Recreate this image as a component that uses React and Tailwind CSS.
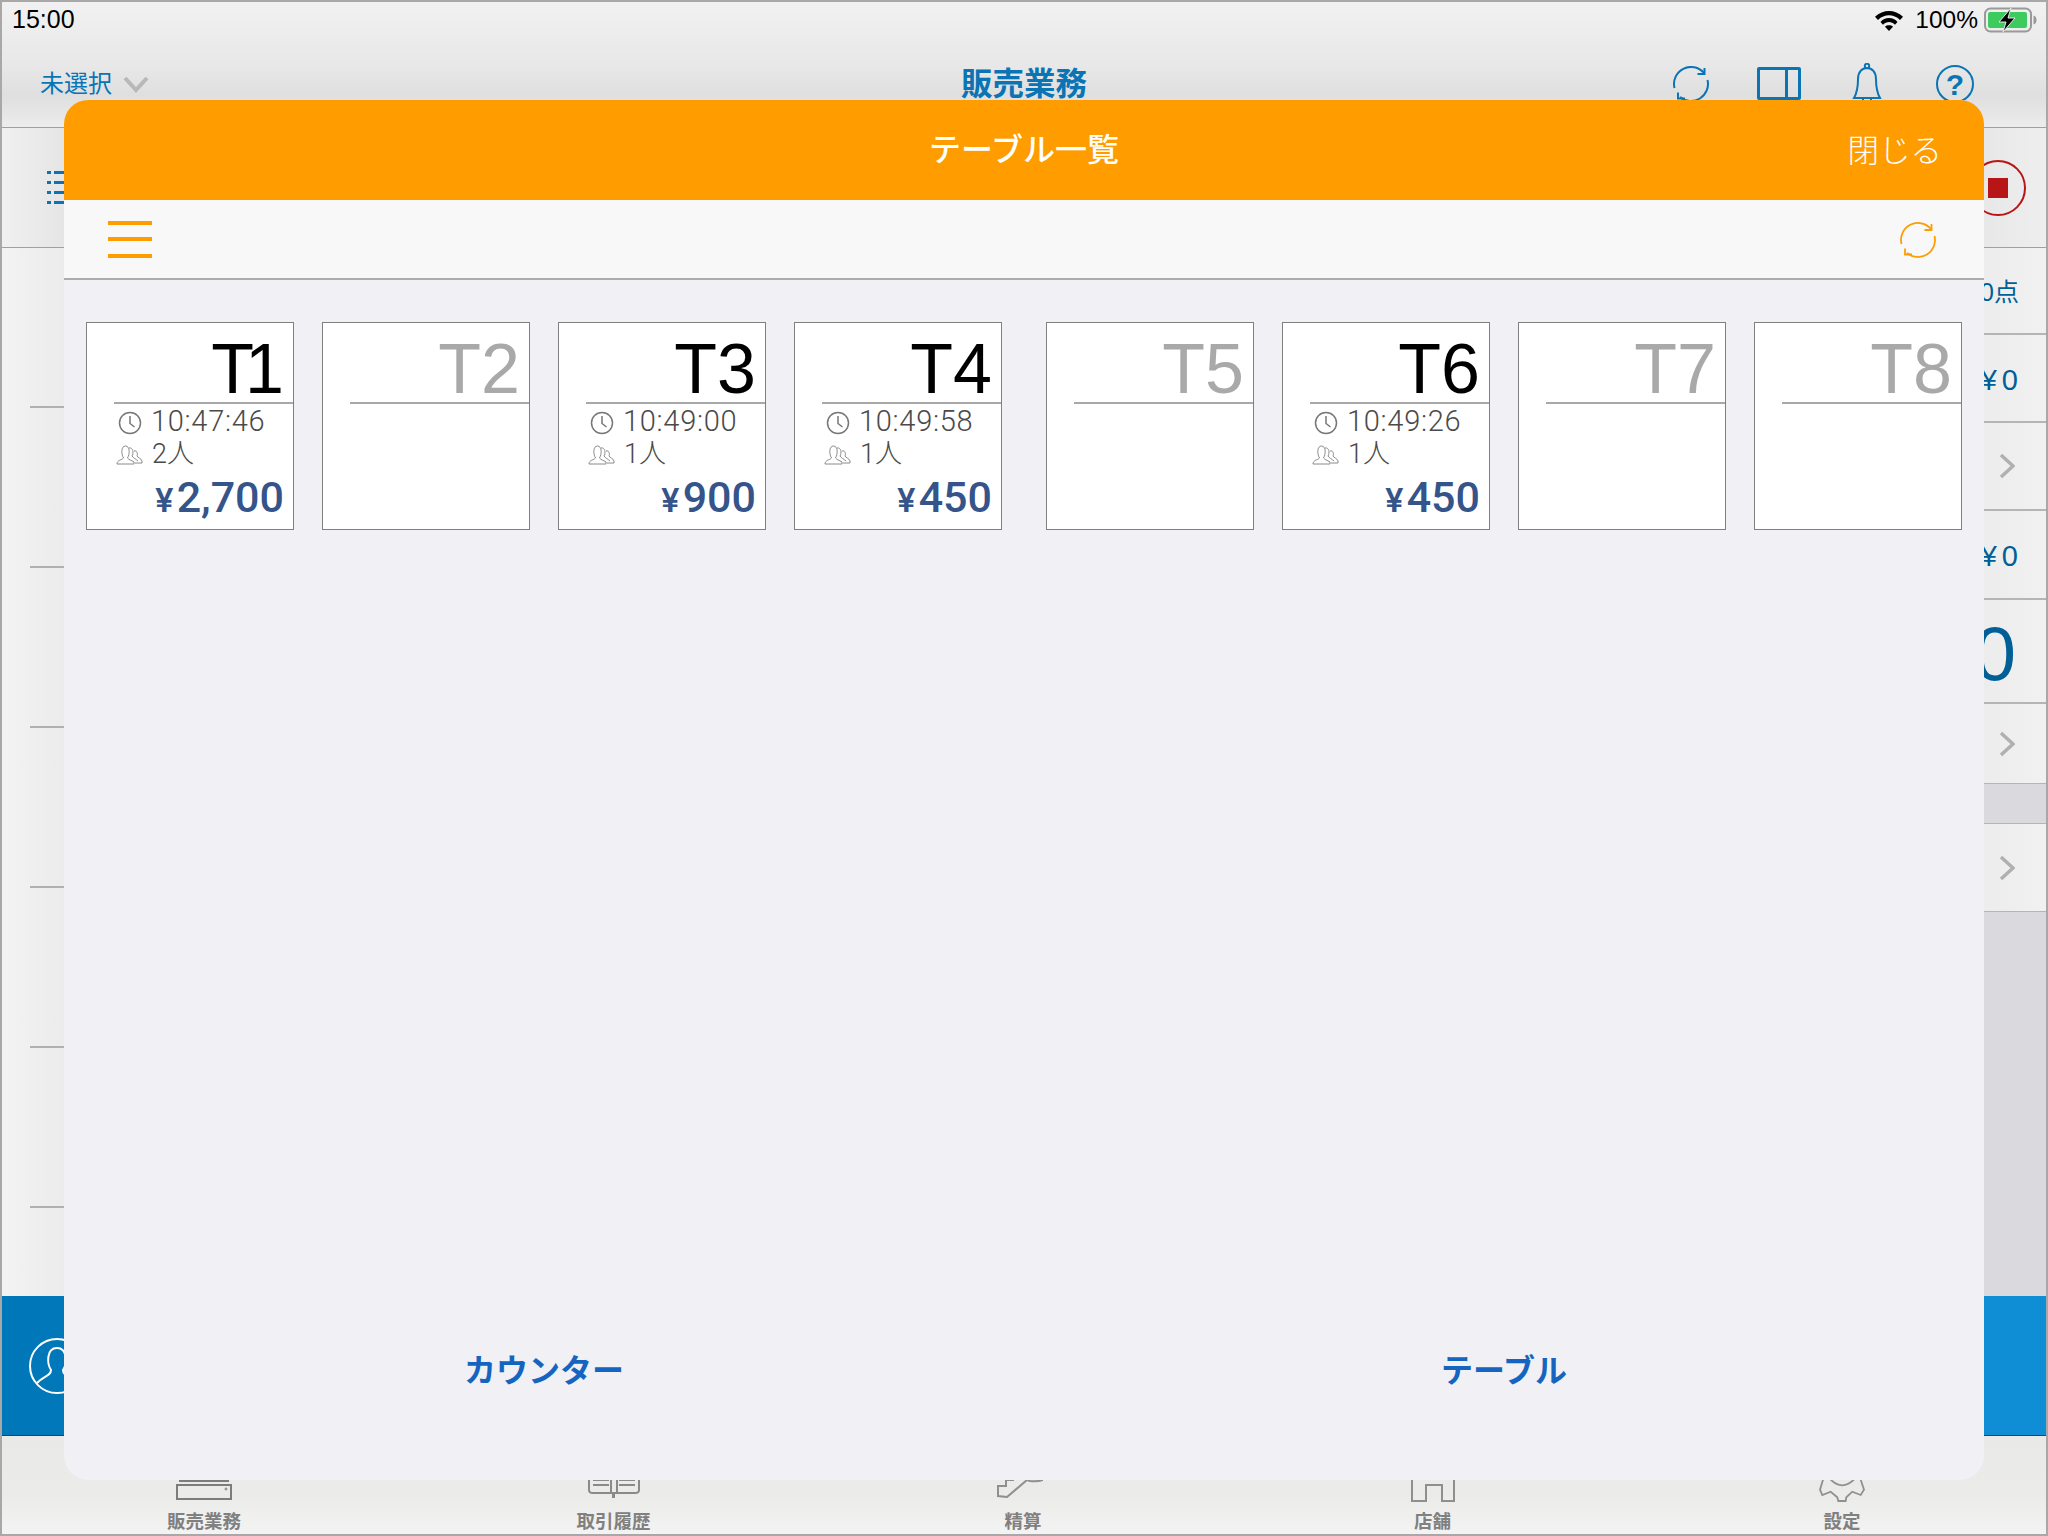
const FONT = "font-['Liberation_Sans','Noto_Sans_CJK_JP',sans-serif]";

function RefreshIcon({ className, color, width }) {
  return (
    <svg className={className} viewBox="0 0 36 36" fill="none" stroke={color} strokeWidth={width}>
      <path d="M1.5 22 A17 17 0 0 1 31 7" />
      <path d="M24.500 8 H31.500 V2" />
      <path d="M34.5 14 A17 17 0 0 1 7 31" />
      <path d="M5 26.500 V32.500 H12" />
    </svg>
  );
}

function Clock() {
  return (
    <svg className="w-[24px] h-[24px] shrink-0 mt-[3px]" viewBox="0 0 24 24" fill="none" stroke="#777" strokeWidth="1.5">
      <circle cx="12" cy="12" r="10.500" />
      <path d="M12 5 V12.500 L16.500 16" />
    </svg>
  );
}

function People() {
  return (
    <svg className="w-[27px] h-[20px] shrink-0 mt-[2px]" viewBox="0 0 27 20" fill="none" stroke="#8a8a8a" strokeWidth="1">
      <path d="M1 19 C1 15 6 15 7.500 13 C5 9 5 1 9.500 1 C14 1 14 9 11.500 13 C13 15 15 15 18 17 L18 19 Z" />
      <path d="M13 3 C17 2 18 8 16 11 C17 13 20 14 22 16" />
      <path d="M18 6 C21 5 22 9 21 11 C22 13 25 13 26 16 L26 18 L19 18" />
    </svg>
  );
}

function Card({ name, time, people, price }) {
  const active = Boolean(time);
  return (
    <div className="w-[208px] h-[208px] bg-white border border-[#808080] flex flex-col shrink-0">
      <div className={`h-[81px] ml-[27px] border-b-2 border-[#a8a8a8] flex justify-end items-end pr-[9px] text-[70px] leading-[66px] ${active ? "text-black" : "text-[#a9a9a9]"}`}>
        <span className={name === "T1" ? "tracking-[-9px] mr-[9px]" : ""}>{name}</span>
      </div>
      {active && (
        <div className="flex flex-col pl-[31px] pr-[9px] font-['Roboto','Noto_Sans_CJK_JP',sans-serif] font-light text-[#4a4a4a]">
          <div className="flex items-center gap-[9px] h-[33px] mt-[1px] text-[29px] leading-[33px]">
            <Clock />
            <span className="tracking-[0.7px]">{time}</span>
          </div>
          <div className="flex items-center gap-[9px] -ml-[2px] h-[30px] mt-[1px] text-[27px] leading-[30px]">
            <People />
            <span>{people}</span>
          </div>
          <div className="flex justify-end items-baseline h-[48px] mt-[4px] leading-[48px] text-[#34548a] font-medium text-[43px]">
            <span className="font-['Inter',sans-serif] font-semibold text-[33px] mr-[3px]">¥</span>
            <span>{price}</span>
          </div>
        </div>
      )}
    </div>
  );
}

function Chevron() {
  return (
    <svg className="w-[16px] h-[26px]" viewBox="0 0 16 26" fill="none" stroke="#b0b0b0" strokeWidth="3.500">
      <path d="M2 2 L14 13 L2 24" />
    </svg>
  );
}

function TabItem({ label, children }) {
  return (
    <div className="w-[100px] flex flex-col items-center justify-end">
      <div className="h-[64px] flex items-end">{children}</div>
      <div className="text-[18.500px] leading-[22px] font-bold text-[#808080] mt-[9px]">{label}</div>
    </div>
  );
}

function Background() {
  return (
    <div className="w-[2048px] h-[1536px] flex flex-col border-t-2 border-l-2 border-r-2 border-b-2 border-[#a8a8a8] overflow-hidden">
      <div className="h-[126px] shrink-0 relative border-b border-[#a0a0a0] bg-[linear-gradient(180deg,#f1f1f1_0%,#e8e8e8_50%,#dfdfdf_75%,#ececec_100%)]">
        <div className="flex justify-between items-center h-[36px] pl-[10px] pr-[8px] text-black text-[25px]">
          <span>15:00</span>
          <div className="flex items-center">
            <svg className="w-[28px] h-[21px]" viewBox="0 0 28 22" preserveAspectRatio="none" fill="#000">
              <path d="M14 22 L10 17.500 C12 15.500 16 15.500 18 17.500 Z" />
              <path d="M14 8.500 C17.500 8.500 20.500 10 22.500 12.500 L20 15.500 C16.500 11.500 11.500 11.500 8 15.500 L5.500 12.500 C7.500 10 10.500 8.500 14 8.500 Z" />
              <path d="M14 1 C19 1 24 3 28 7 L25 10.500 C18.500 4 9.500 4 3 10.500 L0 7 C4 3 9 1 14 1 Z" />
            </svg>
            <span className="text-[24.500px] ml-[12px]">100%</span>
            <svg className="w-[54px] h-[26px] ml-[6px]" viewBox="0 0 54 26" fill="none">
              <rect x="1" y="1.500" width="46" height="23" rx="5.500" stroke="#999" strokeWidth="2" />
              <rect x="4" y="5" width="39" height="16" rx="2" fill="#3ecb5e" />
              <path d="M49.500 8.500 C52 9 52.500 11 52.500 13 C52.500 15 52 17 49.500 17.500 Z" fill="#999" />
              <path d="M27 1 L15 15 L22 15 L19 25 L31 11 L24 11 Z" fill="#000" stroke="#e8e8e8" strokeWidth="1" />
            </svg>
          </div>
        </div>
        <div className="flex items-center justify-between h-[72px] mt-[10px] pl-[38px] pr-[72px] relative">
          <div className="flex items-center gap-[11px] text-[24px] text-[#0a74b4]">
            <span>未選択</span>
            <svg className="w-[26px] h-[17px]" viewBox="0 0 26 17" fill="none" stroke="#b8b8b8" strokeWidth="4">
              <path d="M2 2 L13 14 L24 2" />
            </svg>
          </div>
          <span className="absolute left-0 right-0 mt-[2px] text-center text-[31.500px] font-bold text-[#0a74b4] pointer-events-none">販売業務</span>
          <div className="flex items-center">
            <RefreshIcon className="w-[36px] h-[36px]" color="#0a74b4" width="2" />
            <div className="w-[44px] h-[33px] ml-[48px] -mt-[2px] rounded-[2px] border-[3.500px] border-[#0a74b4] flex justify-end"><div className="w-[13px] border-l-[3px] border-[#0a74b4]" /></div>
            <svg className="w-[30px] h-[42px] ml-[51px]" viewBox="0 0 30 42" fill="none" stroke="#0a74b4" strokeWidth="2">
              <circle cx="15" cy="3" r="2.200" />
              <path d="M2 35 C6 28 6 22 6 16 C6 9 10 5 15 5 C20 5 24 9 24 16 C24 22 24 28 28 35 Z" />
              <path d="M11 35 V39 M19 35 V39" />
            </svg>
            <div className="w-[38px] h-[38px] ml-[54px] rounded-full border-2 border-[#0a74b4] flex items-center justify-center text-[30px] font-bold text-[#0a74b4]">?</div>
          </div>
        </div>
      </div>
      <div className="h-[120px] shrink-0 border-b border-[#a0a0a0] flex items-center justify-between pl-[45px] pr-[20px] bg-[linear-gradient(90deg,#f0f0f0_0%,#e2e2e2_4%,#e6e6e6_96%,#eeeeee_100%)]">
        <div className="flex flex-col gap-[7px] w-[40px]">
          {[0, 1, 2, 3].map((i) => (
            <div key={i} className="flex gap-[3px] h-[3px]">
              <div className="w-[4px] bg-[#0a74b4]" />
              <div className="flex-1 bg-[#0a74b4]" />
            </div>
          ))}
        </div>
        <div className="w-[56px] h-[56px] rounded-full border-2 border-[#b71516] flex items-center justify-center">
          <div className="w-[20px] h-[20px] bg-[#b71516]" />
        </div>
      </div>
      <div className="h-[1048px] shrink-0 flex bg-[linear-gradient(90deg,#f3f3f3_0%,#e9e9e9_4%,#ebebeb_96%,#f1f1f1_100%)]">
        <div className="flex-1 flex flex-col pl-[28px]">
          {[0, 1, 2, 3, 4, 5].map((i) => (
            <div key={i} className="h-[160px] shrink-0 border-b-2 border-[#b0b0b0]" />
          ))}
        </div>
        <div className="w-[62px] flex flex-col text-[#005f96] text-[29px] whitespace-nowrap">
          <div className="h-[87px] shrink-0 border-b-2 border-[#b5b5b5] flex items-center justify-end pr-[27px] pt-[5px] text-[25px]">0点</div>
          <div className="h-[88px] shrink-0 border-b-2 border-[#b5b5b5] flex items-center justify-end pr-[28px] pt-[5px]"><span className="mr-[5px]">¥</span>0</div>
          <div className="h-[88px] shrink-0 border-b-2 border-[#b5b5b5] flex items-center justify-end pr-[31px]"><Chevron /></div>
          <div className="h-[89px] shrink-0 border-b-2 border-[#b5b5b5] flex items-center justify-end pr-[28px] pt-[5px]"><span className="mr-[5px]">¥</span>0</div>
          <div className="h-[104px] shrink-0 border-b-2 border-[#b5b5b5] flex items-center justify-end pr-[30px] pt-[5px] text-[76px]">0</div>
          <div className="h-[79px] shrink-0 flex items-center justify-end pr-[31px]"><Chevron /></div>
          <div className="h-[41px] shrink-0 bg-[#d9d9de] border-y border-[#b5b5b5]" />
          <div className="h-[87px] shrink-0 flex items-center justify-end pr-[31px]"><Chevron /></div>
          <div className="flex-1 bg-[#d9d9de] border-t border-[#b5b5b5]" />
        </div>
      </div>
      <div className="h-[140px] shrink-0 border-b border-[#0b4a70] flex items-center pl-[27px] bg-[linear-gradient(90deg,#0077b8_0%,#0f8ed6_100%)]">
        <svg className="w-[56px] h-[56px]" viewBox="0 0 56 56" fill="none" stroke="#fff" strokeWidth="2">
          <circle cx="28" cy="28" r="27" />
          <path d="M8 45 C14 38 22 38 22 32 C18 26 17 10 28 10 C39 10 38 26 34 32 C34 38 42 38 48 45" />
        </svg>
      </div>
      <div className="flex-1 flex justify-between pl-[152px] pr-[154px] items-end pb-[1px] bg-[linear-gradient(180deg,#e9e9e7_0%,#ebebe9_60%,#f3f3f3_100%)]">
        <TabItem label="販売業務">
          <svg className="w-[56px] h-[20px] mb-[2px]" viewBox="0 0 56 20" fill="none" stroke="#7c7c7c" strokeWidth="2">
            <path d="M3 1 H53" />
            <rect x="1" y="5" width="54" height="14" />
            <circle cx="50" cy="9" r="1" strokeWidth="1" />
          </svg>
        </TabItem>
        <TabItem label="取引履歴">
          <svg className="w-[52px] h-[20px] mb-[3px]" viewBox="0 0 52 20" fill="none" stroke="#8a8a8a" strokeWidth="2">
            <path d="M1 0 V11 C1 13 3 14 5 14 H47 C49 14 51 13 51 11 V0" />
            <path d="M25.500 14 V19" strokeWidth="3" />
            <path d="M23 0 V14 M29 0 V14" />
            <path d="M5 6 H21 M31 6 H47 M5 1 H21 M31 1 H47" />
          </svg>
        </TabItem>
        <TabItem label="精算">
          <svg className="w-[46px] h-[19px] mb-[4px] mr-[6px]" viewBox="0 0 46 19" fill="none" stroke="#8f8f8f" strokeWidth="2">
            <path d="M17 1 H9 V7 H1 V17 L10 18 L30 1 L33 2 Q40 3 46 1" />
          </svg>
        </TabItem>
        <TabItem label="店舗">
          <svg className="w-[44px] h-[22px]" viewBox="0 0 44 22" fill="none" stroke="#8f8f8f" strokeWidth="2">
            <path d="M1 0 V21 H15 V5 H31 V21 H43 V0" />
          </svg>
        </TabItem>
        <TabItem label="設定">
          <svg className="w-[46px] h-[23px]" viewBox="0 0 46 23" fill="none" stroke="#909090" strokeWidth="1.800">
            <path d="M4 0.700 L1 10.700 L3.300 16 L11.700 12.700 L18.300 18.300 L19.300 22 H26.700 L27.300 18.300 L33.300 12.700 L41.700 16 L45 10.700 L41.700 0.700" />
            <path d="M11.700 0.700 Q23 12 35 0.700" />
          </svg>
        </TabItem>
      </div>
    </div>
  );
}

function Modal() {
  const left = [
    { name: "T1", time: "10:47:46", people: "2人", price: "2,700" },
    { name: "T2" },
    { name: "T3", time: "10:49:00", people: "1人", price: "900" },
    { name: "T4", time: "10:49:58", people: "1人", price: "450" },
  ];
  const right = [
    { name: "T5" },
    { name: "T6", time: "10:49:26", people: "1人", price: "450" },
    { name: "T7" },
    { name: "T8" },
  ];
  return (
    <div className="absolute left-[64px] top-[100px] w-[1920px] h-[1380px] rounded-[24px] overflow-hidden bg-[#f0f0f5] flex flex-col">
      <div className="h-[100px] shrink-0 bg-[#ff9c00] relative flex items-center justify-center text-white">
        <span className="text-[32px] font-medium">テーブル一覧</span>
        <span className="absolute right-[42px] text-[31.500px] -mt-[2px] font-['Noto_Sans_CJK_JP',sans-serif] font-light">閉じる</span>
      </div>
      <div className="h-[80px] shrink-0 bg-[#f8f8f8] border-b-2 border-[#acacac] flex items-center justify-between pl-[44px] pr-[48px]">
        <div className="w-[44px] flex flex-col gap-[12.500px]">
          <div className="h-[4px] bg-[#ff9c00]" />
          <div className="h-[4px] bg-[#ff9c00]" />
          <div className="h-[4px] bg-[#ff9c00]" />
        </div>
        <RefreshIcon className="w-[36px] h-[36px] mt-[2px]" color="#ff9c00" width="1.800" />
      </div>
      <div className="flex-1 flex pt-[42px]">
        <div className="w-[960px] px-[22px] flex justify-between items-start">
          {left.map((c) => <Card key={c.name} {...c} />)}
        </div>
        <div className="w-[960px] px-[22px] flex justify-between items-start">
          {right.map((c) => <Card key={c.name} {...c} />)}
        </div>
      </div>
      <div className="h-[224px] shrink-0 pt-[5px] flex items-center text-[#1565c0] text-[32px] font-bold">
        <div className="w-[960px] text-center">カウンター</div>
        <div className="w-[960px] text-center">テーブル</div>
      </div>
    </div>
  );
}

export default function App() {
  return (
    <div className={`relative w-[2048px] h-[1536px] overflow-hidden ${FONT}`}>
      <Background />
      <Modal />
    </div>
  );
}
